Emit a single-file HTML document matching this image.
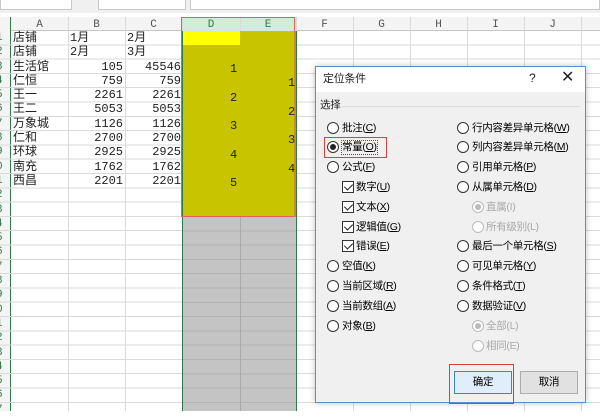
<!DOCTYPE html>
<html><head><meta charset="utf-8"><style>
*{margin:0;padding:0;box-sizing:border-box}
body{width:600px;height:411px;overflow:hidden;background:#fff;position:relative;font-family:"Liberation Sans","Noto Sans CJK SC",sans-serif;}
.a{position:absolute}
.cell{position:absolute;font-family:"Liberation Mono","Noto Sans CJK SC",monospace;font-size:12px;line-height:14px;color:#222;white-space:nowrap}
.r{text-align:right}
.dlg{font-size:11px;color:#222;font-family:"Liberation Sans","Noto Sans CJK SC",sans-serif}
.rad{position:absolute;width:12px;height:12px;border:1px solid #333;border-radius:50%;background:#fff}
.rad.g{border-color:#bbb}
.rad.on::after{content:"";position:absolute;left:2px;top:2px;width:6px;height:6px;border-radius:50%;background:#222}
.rad.g.on::after{background:#bbb}
.chk{position:absolute;width:12px;height:12px;border:1px solid #333;background:#fff}
.chk::after{content:"";position:absolute;left:3px;top:0px;width:4px;height:7px;border:solid #222;border-width:0 1.5px 1.5px 0;transform:rotate(45deg)}
.lb{position:absolute;font-size:10.5px;line-height:13px;white-space:nowrap;letter-spacing:-0.3px}
.gr{color:#aaa}
</style></head><body>
<div class="a" style="left:0;top:0;width:600px;height:13px;background:#f0f0f0"></div>
<div class="a" style="left:0;top:0;width:72px;height:10px;background:#fff;border:1px solid #c8c8c8;border-top:none"></div>
<div class="a" style="left:98px;top:0;width:88px;height:10px;background:#fff;border:1px solid #c8c8c8;border-top:none"></div>
<div class="a" style="left:190px;top:0;width:410px;height:10px;background:#fff;border:1px solid #c8c8c8;border-top:none"></div>
<div class="a" style="left:0;top:17px;width:600px;height:14px;background:#f4f4f4;border-bottom:1px solid #c6c6c6"></div>
<div class="a" style="left:182px;top:17px;width:114px;height:14px;background:#d2ecdc"></div>
<div class="a" style="left:0;top:31px;width:600px;height:380px;background-image:repeating-linear-gradient(to bottom,transparent 0,transparent 13.3px,#dadada 13.3px,#dadada 14.3px)"></div>
<div class="a" style="left:0;top:17px;width:11px;height:394px;background:#f4f4f4;border-right:1px solid #2f7a4a"></div>
<div class="a" style="left:0;top:31px;width:11px;height:380px;background-image:repeating-linear-gradient(to bottom,transparent 0,transparent 13.3px,#dadada 13.3px,#dadada 14.3px)"></div>
<div class="a" style="left:68px;top:17px;width:1px;height:394px;background:#dadada"></div>
<div class="a" style="left:125px;top:17px;width:1px;height:394px;background:#dadada"></div>
<div class="a" style="left:182px;top:17px;width:1px;height:394px;background:#dadada"></div>
<div class="a" style="left:240px;top:17px;width:1px;height:394px;background:#dadada"></div>
<div class="a" style="left:296px;top:17px;width:1px;height:394px;background:#dadada"></div>
<div class="a" style="left:353px;top:17px;width:1px;height:394px;background:#dadada"></div>
<div class="a" style="left:410px;top:17px;width:1px;height:394px;background:#dadada"></div>
<div class="a" style="left:467px;top:17px;width:1px;height:394px;background:#dadada"></div>
<div class="a" style="left:524px;top:17px;width:1px;height:394px;background:#dadada"></div>
<div class="a" style="left:581px;top:17px;width:1px;height:394px;background:#dadada"></div>
<div class="cell" style="left:11px;top:18px;width:57px;text-align:center;color:#555;font-size:11px">A</div>
<div class="cell" style="left:68px;top:18px;width:57px;text-align:center;color:#555;font-size:11px">B</div>
<div class="cell" style="left:125px;top:18px;width:57px;text-align:center;color:#555;font-size:11px">C</div>
<div class="cell" style="left:182px;top:18px;width:58px;text-align:center;color:#2f7a4a;font-size:11px">D</div>
<div class="cell" style="left:240px;top:18px;width:56px;text-align:center;color:#2f7a4a;font-size:11px">E</div>
<div class="cell" style="left:296px;top:18px;width:57px;text-align:center;color:#555;font-size:11px">F</div>
<div class="cell" style="left:353px;top:18px;width:57px;text-align:center;color:#555;font-size:11px">G</div>
<div class="cell" style="left:410px;top:18px;width:57px;text-align:center;color:#555;font-size:11px">H</div>
<div class="cell" style="left:467px;top:18px;width:57px;text-align:center;color:#555;font-size:11px">I</div>
<div class="cell" style="left:524px;top:18px;width:57px;text-align:center;color:#555;font-size:11px">J</div>
<div class="a" style="left:183px;top:31px;width:113px;height:186px;background:#c8c400"></div>
<div class="a" style="left:183px;top:31px;width:57px;height:14px;background:#ffff00"></div>
<div class="a" style="left:183px;top:217px;width:113px;height:194px;background:#c4c4c4;background-image:repeating-linear-gradient(to bottom,transparent 0,transparent 13.3px,#b2b2b2 13.3px,#b2b2b2 14.3px)"></div>
<div class="a" style="left:240px;top:217px;width:1px;height:194px;background:#aaa"></div>
<div class="a" style="left:182px;top:31px;width:115px;height:380px;border-left:1px solid #2f7a4a;border-right:1px solid #2f7a4a"></div>
<div class="a" style="left:181px;top:17px;width:114px;height:200px;border:1px solid #e06060"></div>
<div class="a" style="left:294px;top:31px;width:2px;height:186px;background:#d08a20"></div>
<div class="cell" style="left:-4px;top:31px;color:#2f7a4a;font-size:11px;line-height:14.3px">1<br>2<br>3<br>4<br>5<br>6<br>7<br>8<br>9<br>0<br>1<br>2<br>3<br>4<br>5<br>6<br>7<br>8<br>9<br>0<br>1<br>2<br>3<br>4<br>5<br>6<br>7</div>
<div class="cell" style="left:13px;top:31px;line-height:14.3px">店铺<br>店铺<br>生活馆<br>仁恒<br>王一<br>王二<br>万象城<br>仁和<br>环球<br>南充<br>西昌</div>
<div class="cell" style="left:70px;top:31px;line-height:14.3px">1月<br>2月</div>
<div class="cell" style="left:127px;top:31px;line-height:14.3px">2月<br>3月</div>
<div class="cell r" style="left:68px;top:59.6px;width:55px;line-height:14.3px">105<br>759<br>2261<br>5053<br>1126<br>2700<br>2925<br>1762<br>2201</div>
<div class="cell r" style="left:125px;top:59.6px;width:56px;line-height:14.3px">45546<br>759<br>2261<br>5053<br>1126<br>2700<br>2925<br>1762<br>2201</div>
<div class="cell" style="left:230px;top:62px;line-height:14.3px">1<br><br>2<br><br>3<br><br>4<br><br>5</div>
<div class="cell" style="left:288px;top:76px;line-height:14.3px">1<br><br>2<br><br>3<br><br>4</div>
<div class="a dlg" style="left:315px;top:66px;width:271px;height:337px;background:#f0f0f0;border:1px solid #5a8fd0;box-shadow:0 0 6px rgba(0,0,0,.25)">
 <div class="a" style="left:0;top:0;width:269px;height:25px;background:#fff"></div>
 <div class="lb" style="left:7px;top:6px;font-size:11px">定位条件</div>
 <div class="lb" style="left:213px;top:5px;font-size:12px">?</div>
 <div class="lb" style="left:245px;top:2px;font-size:16px;line-height:18px">✕</div>
 <div class="lb" style="left:4px;top:32px">选择</div>
 <div class="a" style="left:26px;top:39px;width:238px;height:1px;background:#dcdcdc"></div>
</div>
<div class="a" style="left:324px;top:137px;width:63px;height:21px;border:1px solid #d94040"></div>
<div class="a" style="left:449px;top:364px;width:65px;height:40px;border:1px solid #d94040"></div>
<div class="a" style="left:454px;top:371px;width:58px;height:23px;background:#e0eefb;border:1px solid #3b84d8"></div>
<div class="lb" style="left:454px;top:376px;width:58px;text-align:center">确定</div>
<div class="a" style="left:520px;top:371px;width:58px;height:23px;background:#e1e1e1;border:1px solid #adadad"></div>
<div class="lb" style="left:520px;top:376px;width:58px;text-align:center">取消</div>

<div class="rad" style="left:327px;top:122px"></div><div class="lb" style="left:342px;top:122px">批注(<u>C</u>)</div>
<div class="rad on" style="left:327px;top:141px"></div><div class="lb" style="left:342px;top:141px;outline:1px dotted #555">常量(<u>O</u>)</div>
<div class="rad" style="left:327px;top:161px"></div><div class="lb" style="left:342px;top:161px">公式(<u>F</u>)</div>
<div class="chk" style="left:342px;top:181px"></div><div class="lb" style="left:356px;top:181px">数字(<u>U</u>)</div>
<div class="chk" style="left:342px;top:201px"></div><div class="lb" style="left:356px;top:201px">文本(<u>X</u>)</div>
<div class="chk" style="left:342px;top:221px"></div><div class="lb" style="left:356px;top:221px">逻辑值(<u>G</u>)</div>
<div class="chk" style="left:342px;top:240px"></div><div class="lb" style="left:356px;top:240px">错误(<u>E</u>)</div>
<div class="rad" style="left:327px;top:260px"></div><div class="lb" style="left:342px;top:260px">空值(<u>K</u>)</div>
<div class="rad" style="left:327px;top:280px"></div><div class="lb" style="left:342px;top:280px">当前区域(<u>R</u>)</div>
<div class="rad" style="left:327px;top:300px"></div><div class="lb" style="left:342px;top:300px">当前数组(<u>A</u>)</div>
<div class="rad" style="left:327px;top:320px"></div><div class="lb" style="left:342px;top:320px">对象(<u>B</u>)</div>

<div class="rad" style="left:457px;top:122px"></div><div class="lb" style="left:472px;top:122px">行内容差异单元格(<u>W</u>)</div>
<div class="rad" style="left:457px;top:141px"></div><div class="lb" style="left:472px;top:141px">列内容差异单元格(<u>M</u>)</div>
<div class="rad" style="left:457px;top:161px"></div><div class="lb" style="left:472px;top:161px">引用单元格(<u>P</u>)</div>
<div class="rad" style="left:457px;top:181px"></div><div class="lb" style="left:472px;top:181px">从属单元格(<u>D</u>)</div>
<div class="rad g on" style="left:472px;top:201px"></div><div class="lb gr" style="left:486px;top:201px">直属(I)</div>
<div class="rad g" style="left:472px;top:221px"></div><div class="lb gr" style="left:486px;top:221px">所有级别(L)</div>
<div class="rad" style="left:457px;top:240px"></div><div class="lb" style="left:472px;top:240px">最后一个单元格(<u>S</u>)</div>
<div class="rad" style="left:457px;top:260px"></div><div class="lb" style="left:472px;top:260px">可见单元格(<u>Y</u>)</div>
<div class="rad" style="left:457px;top:280px"></div><div class="lb" style="left:472px;top:280px">条件格式(<u>T</u>)</div>
<div class="rad" style="left:457px;top:300px"></div><div class="lb" style="left:472px;top:300px">数据验证(<u>V</u>)</div>
<div class="rad g on" style="left:472px;top:320px"></div><div class="lb gr" style="left:486px;top:320px">全部(L)</div>
<div class="rad g" style="left:472px;top:340px"></div><div class="lb gr" style="left:486px;top:340px">相同(E)</div>
</body></html>
